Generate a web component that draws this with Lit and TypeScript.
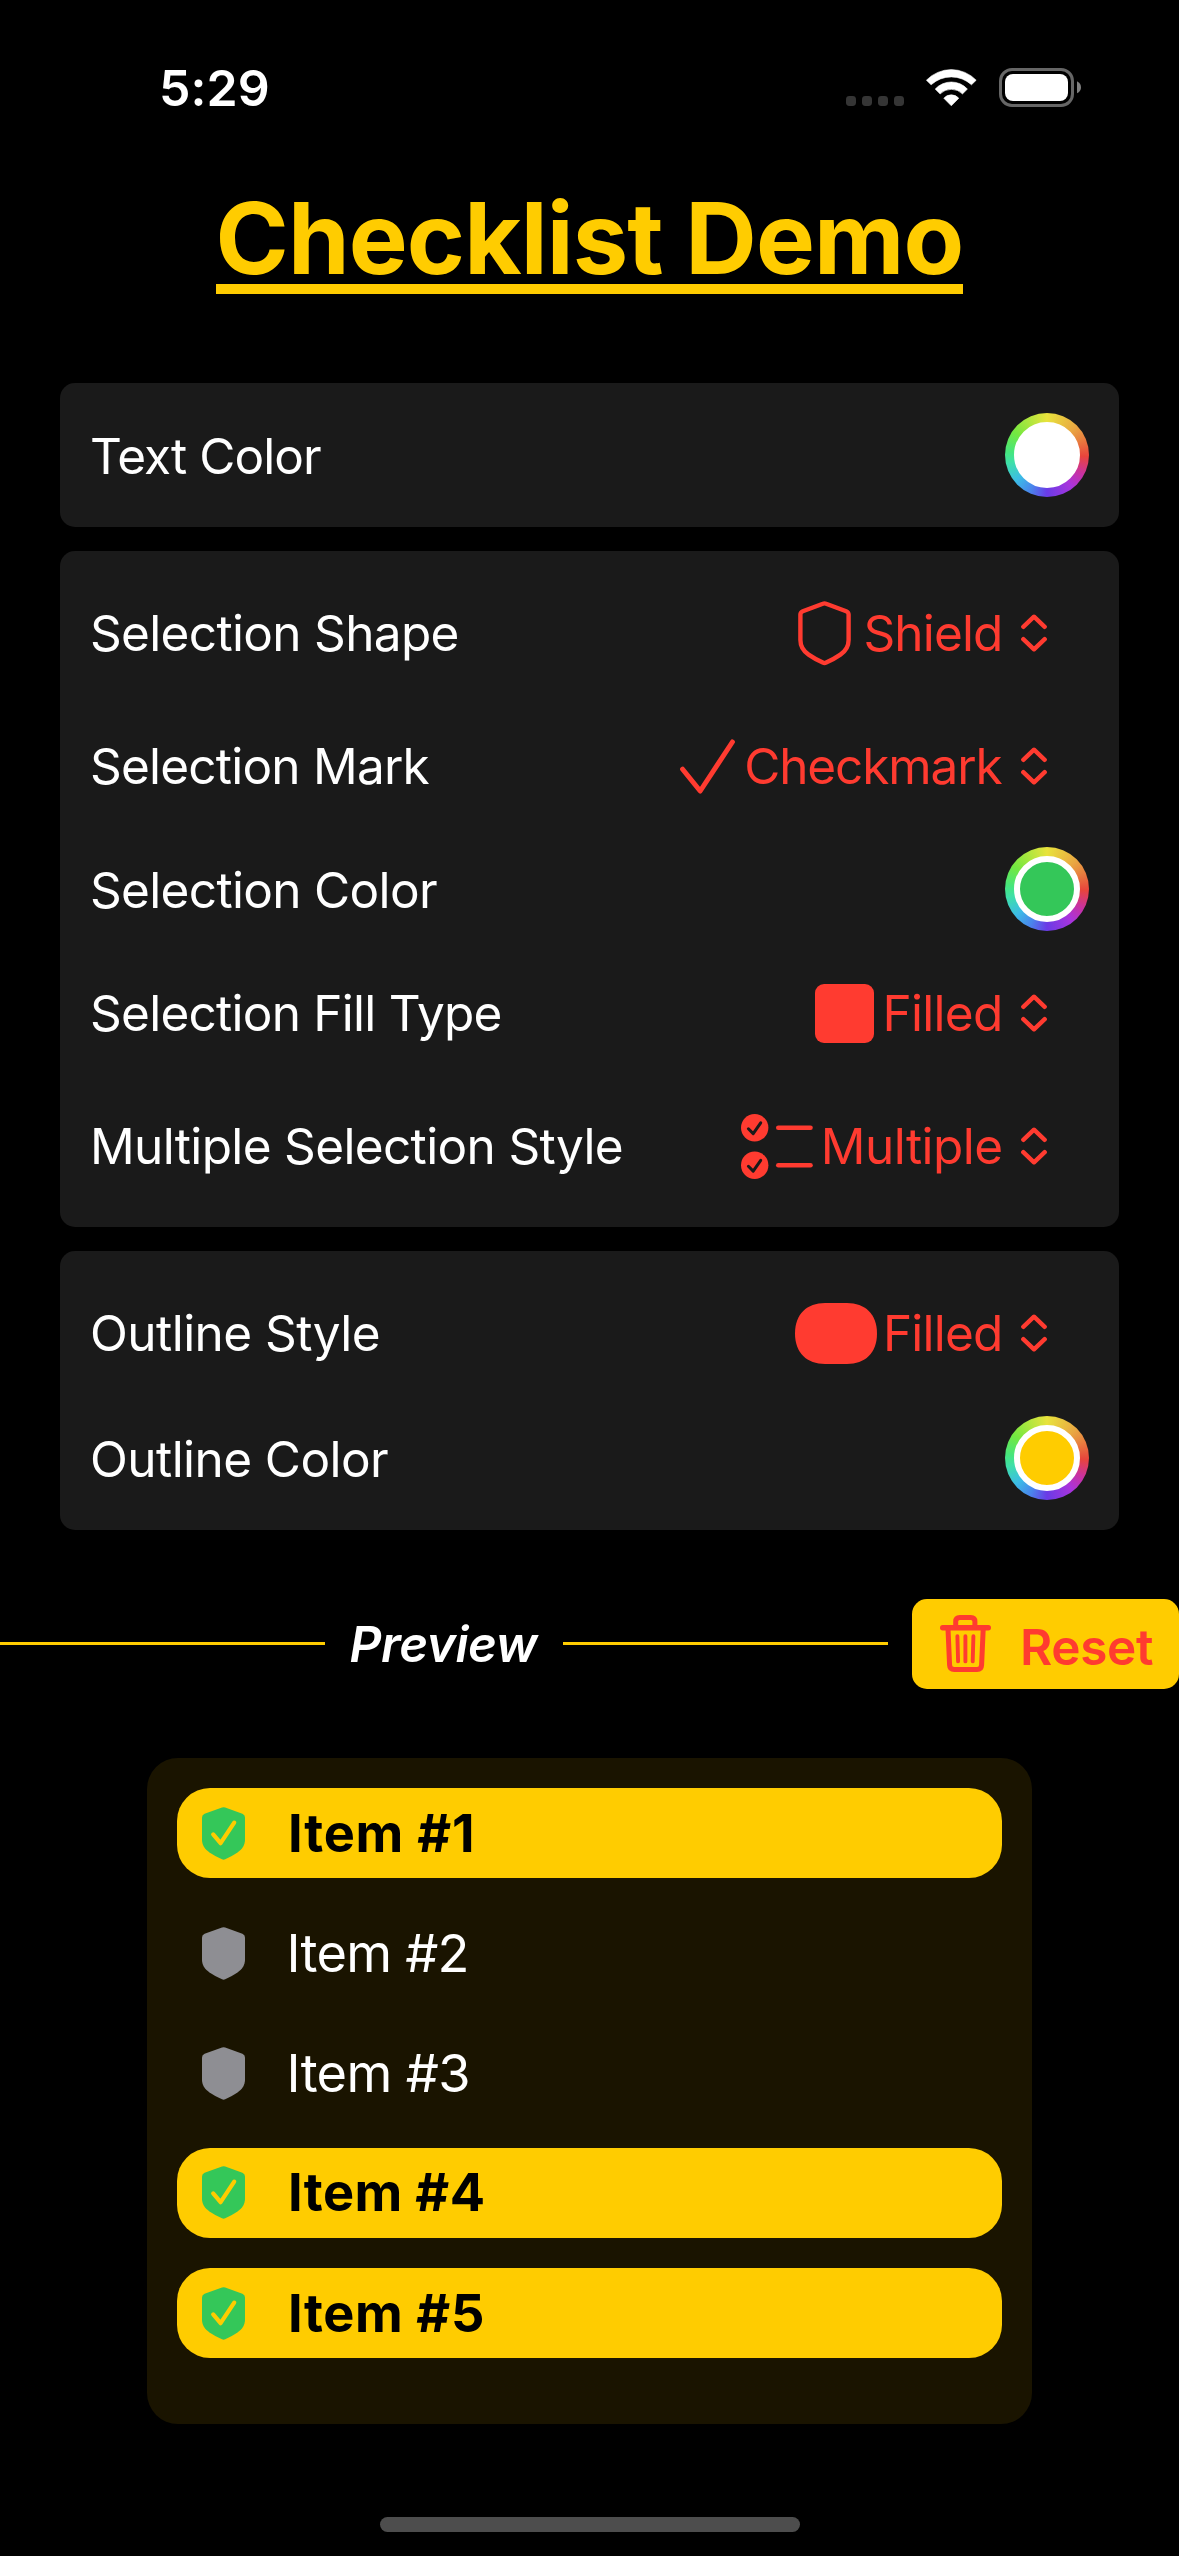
import { LitElement, html, css, svg, nothing, type TemplateResult } from "lit";
import { customElement, property, state } from "lit/decorators.js";
import { classMap } from "lit/directives/class-map.js";
import { styleMap } from "lit/directives/style-map.js";

type IconName = "shield" | "check" | "square" | "list" | "capsule";

interface SettingRow {
  label: string;
  /** Letter spacing of the label, px. */
  tracking: number;
  color?: string;
  icon?: IconName;
  value?: string;
  valueTracking?: number;
}

interface ChecklistItem {
  title: string;
  tracking: number;
  selected: boolean;
}

const ICONS: Record<IconName, TemplateResult> = {
  shield: html`<svg class="icon shield" width="53" height="65" viewBox="0 0 53 65">
    <path
      fill="none"
      stroke="currentColor"
      stroke-width="4.4"
      stroke-linejoin="round"
      d="M24.9 2.7Q26.5 2 28.1 2.7L48.2 10.2Q50.6 11.2 50.6 13.6V39C50.6 45 48.3 49.6 42.4 53.6Q36 58 28.2 61.6Q26.5 62.4 24.8 61.6Q17 58 10.6 53.6C4.7 49.6 2.4 45 2.4 39V13.6Q2.4 11.2 4.8 10.2Z"
    />
  </svg>`,
  check: html`<svg class="icon check" width="55" height="55" viewBox="0 0 55 55">
    <path fill="none" stroke="currentColor" stroke-width="5" stroke-linecap="round" stroke-linejoin="round" d="M2.6 30.2L20.2 52L52.4 3" />
  </svg>`,
  square: html`<svg class="icon square" width="59" height="59" viewBox="0 0 59 59">
    <rect width="59" height="59" rx="9" fill="currentColor" />
  </svg>`,
  list: html`<svg class="icon list" width="72" height="65" viewBox="0 0 72 65">
    ${[13.8, 51.3].map(
      (cy) => svg`<g transform=${`translate(0 ${cy})`}>
        <circle cx="13.7" cy="0" r="13.7" fill="currentColor" />
        <path d="M7.4 1L12.2 5.8L19.7 -5" fill="none" stroke="#1a1a1a" stroke-width="3" stroke-linecap="round" stroke-linejoin="round" />
        <path d="M37.3 0H69.5" stroke="currentColor" stroke-width="4.6" stroke-linecap="round" />
      </g>`,
    )}
  </svg>`,
  capsule: html`<svg class="icon capsule" width="82" height="61" viewBox="0 0 82 61">
    <path fill="currentColor" d="M30 0H52C70 0 82 11 82 30.5S70 61 52 61H30C12 61 0 50 0 30.5S12 0 30 0Z" />
  </svg>`,
};

const TEXT_ROWS: SettingRow[] = [{ label: "Text Color", tracking: -0.93, color: "#ffffff" }];

const SELECTION_ROWS: SettingRow[] = [
  { label: "Selection Shape", tracking: -0.67, icon: "shield", value: "Shield", valueTracking: -0.85 },
  { label: "Selection Mark", tracking: -0.78, icon: "check", value: "Checkmark", valueTracking: -1.1 },
  { label: "Selection Color", tracking: -0.67, color: "#34c759" },
  { label: "Selection Fill Type", tracking: -0.74, icon: "square", value: "Filled", valueTracking: -0.72 },
  { label: "Multiple Selection Style", tracking: -0.65, icon: "list", value: "Multiple", valueTracking: -0.55 },
];

const OUTLINE_ROWS: SettingRow[] = [
  { label: "Outline Style", tracking: -0.54, icon: "capsule", value: "Filled", valueTracking: -0.8 },
  { label: "Outline Color", tracking: -0.56, color: "#ffcc00" },
];

@customElement("status-bar")
export class StatusBar extends LitElement {
  static styles = css`
    :host {
      display: flex;
      align-items: center;
      justify-content: space-between;
      height: 175px;
      padding: 0 98px 0 159px;
      box-sizing: border-box;
      color: #fff;
    }
    .time {
      font-weight: 600;
      font-size: 50px;
      line-height: 60px;
      letter-spacing: 0.1px;
    }
    .signals {
      display: flex;
      align-items: center;
      gap: 22px;
    }
    svg {
      display: block;
    }
  `;

  render() {
    return html`
      <span class="time">5:29</span>
      <div class="signals">
        <svg width="58" height="37" viewBox="0 0 58 37">
          ${[0, 16, 32, 48].map((x) => svg`<rect x=${x} y="27" width="10" height="10" rx="3.4" fill="#353535" />`)}
        </svg>
        <svg width="51" height="37" viewBox="0 0 51 37">
          <g fill="#fff" stroke="#fff" stroke-width="0.6" stroke-linejoin="round">
            <path d="M0.4 11.2A34.6 34.6 0 0 1 50.2 11.2L45.5 15.8A29.8 29.8 0 0 0 5.1 15.8Z" />
            <path d="M9.2 20.1A21.8 21.8 0 0 1 41.4 20.1L36.5 24.9A15.9 15.9 0 0 0 14.1 24.9Z" />
            <path d="M17.8 29.2A10 10 0 0 1 32.8 29.2L25.3 36.8Z" />
          </g>
        </svg>
        <svg width="82" height="39" viewBox="0 0 82 39">
          <rect x="1.5" y="1.5" width="72" height="36" rx="11.5" fill="none" stroke="#666" stroke-width="3" />
          <rect x="6" y="6" width="63" height="27" rx="8" fill="#fff" />
          <path d="M78 13.3Q82 15.3 82 19.3T78 25.3Z" fill="#808080" />
        </svg>
      </div>
    `;
  }
}

@customElement("settings-card")
export class SettingsCard extends LitElement {
  @property({ attribute: false }) rows: SettingRow[] = [];

  static styles = css`
    :host {
      display: flex;
      flex-direction: column;
      gap: 30px;
      padding: 30px;
      border-radius: 15px;
      background: #1a1a1a;
      color: #fff;
      font-size: 49.5px;
      line-height: 60px;
      white-space: nowrap;
    }
    .row {
      display: flex;
      align-items: center;
      justify-content: space-between;
      height: 103px;
    }
    .row.tall {
      height: 105px;
    }
    .row.swatch {
      height: 84px;
    }
    .tall .label,
    .tall .value,
    .tall .chevrons {
      padding-bottom: 1px;
    }
    .swatch .label {
      padding-top: 1px;
    }
    .well {
      box-sizing: border-box;
      width: 84px;
      height: 84px;
      padding: 9px;
      border-radius: 50%;
      background: conic-gradient(
        #e8e33c 0deg,
        #e9a842 45deg,
        #e8813f 65deg,
        #e8443c 92deg,
        #c932a0 118deg,
        #a934dc 142deg,
        #6a3be6 180deg,
        #4a86ec 205deg,
        #3cbce6 230deg,
        #3ee0a8 258deg,
        #46e67c 275deg,
        #74e840 305deg,
        #b4e63e 335deg,
        #e8e33c 360deg
      );
    }
    .dot {
      box-sizing: border-box;
      width: 66px;
      height: 66px;
      border: 6px solid #fff;
      border-radius: 50%;
    }
    .menu {
      display: flex;
      align-items: center;
      padding-right: 42px;
      color: #ff3b30;
    }
    .icon {
      display: block;
      margin-top: 2px;
    }
    .shield {
      margin-right: 12.5px;
    }
    .check {
      margin-right: 9px;
    }
    .square {
      margin-right: 8.5px;
    }
    .list {
      margin-right: 8px;
    }
    .capsule {
      margin-top: 0;
      margin-right: 6px;
    }
    .chevrons {
      display: block;
      margin-left: 18.5px;
    }
    .check + .value {
      margin-right: 0.8px;
    }
  `;

  private renderControl(row: SettingRow) {
    if (row.color) {
      return html`<div class="well"><div class="dot" style=${styleMap({ background: row.color })}></div></div>`;
    }
    return html`
      <div class="menu">
        ${row.icon ? ICONS[row.icon] : nothing}
        <span class="value" style=${styleMap({ letterSpacing: `${row.valueTracking ?? 0}px` })}>${row.value}</span>
        <svg class="chevrons" width="26" height="38" viewBox="0 0 26 38">
          <path
            fill="none"
            stroke="currentColor"
            stroke-width="4.4"
            stroke-linecap="round"
            stroke-linejoin="round"
            d="M2.3 12.8L13 2.7L23.7 12.8M2.3 25.2L13 35.3L23.7 25.2"
          />
        </svg>
      </div>
    `;
  }

  render() {
    return this.rows.map(
      (row) => html`
        <div class=${classMap({ row: true, swatch: !!row.color, tall: row.icon === "capsule" })}>
          <span class="label" style=${styleMap({ letterSpacing: `${row.tracking}px` })}>${row.label}</span>
          ${this.renderControl(row)}
        </div>
      `,
    );
  }
}

@customElement("check-list")
export class CheckList extends LitElement {
  @property({ attribute: false }) items: ChecklistItem[] = [];

  static styles = css`
    :host {
      display: flex;
      flex-direction: column;
      gap: 30px;
      box-sizing: border-box;
      width: 885px;
      height: 666px;
      padding: 30px;
      border-radius: 31px;
      background: #1a1400;
    }
    .item {
      display: flex;
      align-items: center;
      gap: 41.5px;
      box-sizing: border-box;
      height: 90px;
      padding-left: 25px;
      border-radius: 33px;
      color: #fff;
      font-size: 52.3px;
      line-height: 64px;
    }
    .item.selected {
      gap: 43px;
      background: #ffcc00;
      color: #000;
      font-weight: 700;
    }
    .item:nth-of-type(4) {
      padding-bottom: 2px;
    }
    .badge {
      display: block;
      fill: #8e8e93;
    }
    .selected .badge {
      fill: #34c759;
    }
  `;

  render() {
    return this.items.map(
      (item) => html`
        <div class=${classMap({ item: true, selected: item.selected })}>
          <svg class="badge" width="43" height="53" viewBox="0 0 43 53">
            <path
              d="M20 0.5Q21.6 0 23.2 0.5L40.4 6.8Q43 7.8 43 10.4V32.5C43 38 40.5 42 35.5 45.4Q29.5 49.4 23.2 52.3Q21.6 53 20 52.3Q13.5 49.4 7.5 45.4C2.5 42 0 38 0 32.5V10.4Q0 7.8 2.6 6.8Z"
            />
            ${item.selected
              ? svg`<path d="M11.2 27.4L18.6 36.2L32.2 15.6" fill="none" stroke="#ffcc00" stroke-width="4.2" stroke-linecap="round" stroke-linejoin="round" />`
              : nothing}
          </svg>
          <span style=${styleMap({ letterSpacing: `${item.tracking}px` })}>${item.title}</span>
        </div>
      `,
    );
  }
}

@customElement("app-root")
export class AppRoot extends LitElement {
  @state() private items: ChecklistItem[] = [
    { title: "Item #1", tracking: 0.78, selected: true },
    { title: "Item #2", tracking: -0.75, selected: false },
    { title: "Item #3", tracking: -0.65, selected: false },
    { title: "Item #4", tracking: 0.4, selected: true },
    { title: "Item #5", tracking: 0.6, selected: true },
  ];

  static styles = css`
    :host {
      display: flex;
      flex-direction: column;
      align-items: center;
      width: 1179px;
      height: 2556px;
      overflow: hidden;
      background: #000;
      font-family: Inter, "Liberation Sans", sans-serif;
    }
    status-bar {
      align-self: stretch;
    }
    h1 {
      margin: 17px 0 89px;
      border-bottom: 10px solid #ffcc00;
      color: #ffcc00;
      font-size: 99px;
      font-weight: 700;
      line-height: 92px;
      letter-spacing: -0.85px;
      white-space: nowrap;
    }
    .cards {
      display: flex;
      flex-direction: column;
      gap: 24px;
      align-self: stretch;
      padding: 0 60px;
    }
    .divider {
      display: flex;
      align-items: center;
      align-self: stretch;
      gap: 24px;
      margin: 69px 0;
    }
    .rule {
      flex: 1;
      height: 3px;
      margin-bottom: 1px;
      background: #ffcc00;
    }
    .caption {
      width: 190px;
      color: #fff;
      font-size: 49.5px;
      font-style: italic;
      font-weight: 600;
      line-height: 60px;
      letter-spacing: -0.4px;
      text-indent: 0.5px;
      white-space: nowrap;
    }
    .reset {
      display: flex;
      align-items: center;
      gap: 29px;
      box-sizing: border-box;
      width: 267px;
      height: 90px;
      margin: 0;
      padding: 0 0 0 28px;
      border: 0;
      border-radius: 15px;
      background: #ffcc00;
      color: #ff3b30;
      font: 600 49.5px/60px Inter, "Liberation Sans", sans-serif;
      letter-spacing: -0.35px;
    }
    .reset span {
      padding-top: 6px;
    }
    .home {
      width: 420px;
      height: 15px;
      margin-top: 93px;
      border-radius: 8px;
      background: #4d4d4d;
    }
  `;

  private reset() {
    this.items = this.items.map((item) => ({ ...item, selected: false }));
  }

  render() {
    return html`
      <status-bar></status-bar>
      <h1>Checklist Demo</h1>
      <div class="cards">
        <settings-card .rows=${TEXT_ROWS}></settings-card>
        <settings-card .rows=${SELECTION_ROWS}></settings-card>
        <settings-card .rows=${OUTLINE_ROWS}></settings-card>
      </div>
      <div class="divider">
        <div class="rule"></div>
        <span class="caption">Preview</span>
        <div class="rule"></div>
        <button class="reset" @click=${this.reset}>
          <svg width="51" height="58" viewBox="0 0 51 58" fill="none" stroke="currentColor" stroke-linecap="round" stroke-linejoin="round">
            <path stroke-width="5.4" d="M2.7 12.8H48.3" />
            <path stroke-width="5" d="M15.7 11V6.6Q15.7 2.6 19.7 2.6H30.9Q34.9 2.6 34.9 6.6V11M8 14L9.6 50.2Q9.8 54.6 14.2 54.6H37.1Q41.4 54.6 41.6 50.2L43.2 14" />
            <path stroke-width="3.9" d="M17.4 21.2L18.1 46.4M25.4 21.2V46.4M33.4 21.2L32.7 46.4" />
          </svg>
          <span>Reset</span>
        </button>
      </div>
      <check-list .items=${this.items}></check-list>
      <div class="home"></div>
    `;
  }
}
